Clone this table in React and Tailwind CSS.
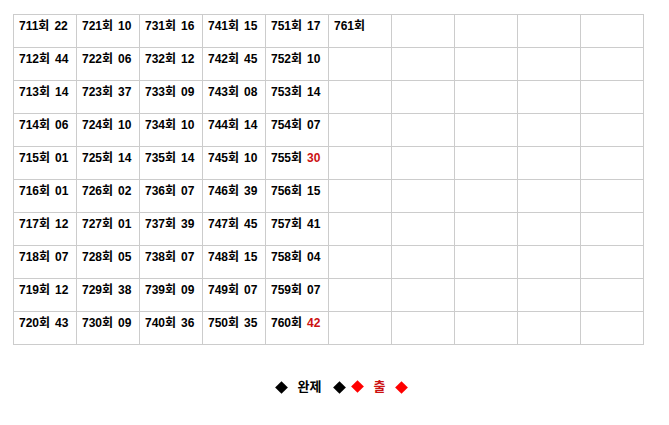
import React from 'react'

// 회차별 번호 (열 단위)
const columns = [
  { start: 711, nums: ['22', '44', '14', '06', '01', '01', '12', '07', '12', '43'] },
  { start: 721, nums: ['10', '06', '37', '10', '14', '02', '01', '05', '38', '09'] },
  { start: 731, nums: ['16', '12', '09', '10', '14', '07', '39', '07', '09', '36'] },
  { start: 741, nums: ['15', '45', '08', '14', '10', '39', '45', '15', '07', '35'] },
  { start: 751, nums: ['17', '10', '14', '07', '30', '15', '41', '04', '07', '42'], red: [4, 9] },
  { start: 761, nums: [null], pending: true },
]

const font = { fontFamily: '"Liberation Sans", "Noto Sans CJK KR", sans-serif' }

function Diamond({ red }) {
  return (
    <span className="inline-flex w-[12px] h-[12px] items-center justify-center">
      <span className={`block w-[9px] h-[9px] rotate-45 ${red ? 'bg-[#ff0000]' : 'bg-black'}`} />
    </span>
  )
}

function Cell({ col, row }) {
  const c = columns[col]
  if (!c || row >= c.nums.length) return null
  const round = c.start + row
  const num = c.nums[row]
  const isRed = c.red?.includes(row)
  return (
    <span className="whitespace-nowrap">
      {round}회
      {num && (
        <span className={`ml-[5px] ${isRed ? 'text-[#cc1111]' : 'text-black'}`}>{num}</span>
      )}
    </span>
  )
}

export default function App() {
  const rows = Array.from({ length: 10 }, (_, i) => i)
  const cols = Array.from({ length: 10 }, (_, i) => i)

  return (
    <div className="w-[669px] h-[425px] bg-white font-bold text-[12px] text-black" style={font}>
      <table className="ml-[13px] mt-[14px] border-collapse table-fixed w-[631px]">
        <tbody>
          {rows.map(r => (
            <tr key={r} className="h-[33px]">
              {cols.map(c => (
                <td
                  key={c}
                  className="border border-[#cccccc] w-[63px] align-top pl-[5px] pr-0 pt-[3px] leading-[16px]"
                >
                  <Cell col={c} row={r} />
                </td>
              ))}
            </tr>
          ))}
        </tbody>
      </table>

      {/* 범례 */}
      <div className="flex items-center justify-center mt-[35px] pl-[14px] h-[14px]">
        <Diamond />
        <span className="ml-[10px] mr-[12px] text-[13px]">완제</span>
        <Diamond />
        <span className="ml-[6px]"><Diamond red /></span>
        <span className="ml-[10px] mr-[10px] text-[13px] text-[#cc1111]">출</span>
        <Diamond red />
      </div>
    </div>
  )
}
